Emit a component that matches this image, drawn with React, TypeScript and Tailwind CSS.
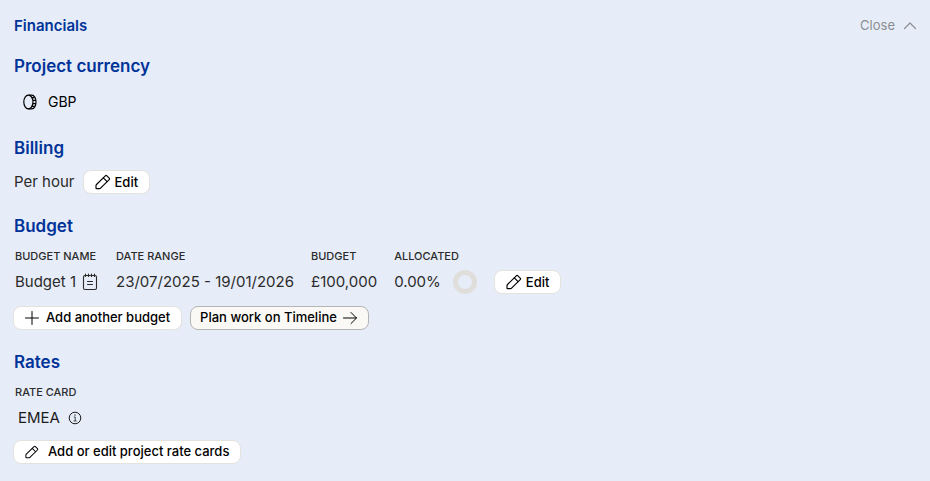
import React, { useState } from "react";

type IconProps = { className?: string };

function PencilIcon({ className }: IconProps) {
  return (
    <svg
      viewBox="0 0 16 16"
      fill="none"
      stroke="currentColor"
      strokeWidth="1.15"
      strokeLinecap="round"
      strokeLinejoin="round"
      className={className}
      aria-hidden="true"
    >
      <path d="M1.6 14.6Q1 14.6 1 14V11.6Q1 11 1.5 10.5L10.3 1.8Q11.1 1 11.9 1.8L14.2 4.1Q15 4.9 14.2 5.7L5.6 14.1Q5.1 14.6 4.4 14.6Z" />
      <path d="M8.3 3.9L12.1 7.7" />
    </svg>
  );
}

function CoinIcon({ className }: IconProps) {
  return (
    <svg
      viewBox="0 0 16 16"
      fill="none"
      stroke="currentColor"
      strokeWidth="1.2"
      className={className}
      aria-hidden="true"
    >
      <ellipse cx="6.4" cy="8" rx="4.6" ry="6.8" />
      <path d="M6.4 1.2H9.8C12.2 1.2 14 4.2 14 8S12.2 14.8 9.8 14.8H6.4" />
      <path d="M9.6 3.6H12.4M10.8 6.4H13.8M10.8 9.6H13.8M9.6 12.4H12.4" />
    </svg>
  );
}

function NotepadIcon({ className }: IconProps) {
  return (
    <svg
      viewBox="0 0 16 18"
      fill="none"
      stroke="currentColor"
      strokeWidth="1.1"
      strokeLinecap="round"
      className={className}
      aria-hidden="true"
    >
      <rect x="1.5" y="2.5" width="13" height="14" rx="1.5" />
      <path d="M3.5 1V3.5M6.5 1V3.5M9.5 1V3.5M12.5 1V3.5" />
      <path d="M5.5 8.5H10.5M5.5 11.5H10.5" />
    </svg>
  );
}

function PlusIcon({ className }: IconProps) {
  return (
    <svg viewBox="0 0 14 14" fill="none" stroke="currentColor" className={className} aria-hidden="true">
      <path d="M7 0.5V13.5M0.5 7H13.5" strokeLinecap="round" />
    </svg>
  );
}

function ArrowIcon({ className }: IconProps) {
  return (
    <svg
      viewBox="0 0 14 14"
      fill="none"
      stroke="currentColor"
      strokeLinecap="round"
      strokeLinejoin="round"
      className={className}
      aria-hidden="true"
    >
      <path d="M0.5 7H13.5M8 1.5L13.5 7L8 12.5" />
    </svg>
  );
}

function InfoIcon({ className }: IconProps) {
  return (
    <svg viewBox="0 0 14 14" fill="none" stroke="currentColor" className={className} aria-hidden="true">
      <circle cx="7" cy="7" r="5.8" />
      <path d="M5.8 6H7.2V10M5.6 10H8.6" strokeWidth="0.8" />
      <circle cx="7" cy="4" r="0.7" fill="currentColor" stroke="none" />
    </svg>
  );
}

function ChevronIcon({ className }: IconProps) {
  return (
    <svg
      viewBox="0 0 14 14"
      fill="none"
      stroke="currentColor"
      strokeWidth="1.2"
      strokeLinecap="round"
      strokeLinejoin="round"
      className={className}
      aria-hidden="true"
    >
      <path d="M1.5 9.5L7 4L12.5 9.5" />
    </svg>
  );
}

const buttonBase =
  "flex h-6 items-center rounded-lg border text-[13px] font-medium whitespace-nowrap text-black";
const buttonLight = `${buttonBase} border-[#e4e2dd] bg-white px-[11px]`;

function Section({ title, children }: { title: string; children: React.ReactNode }) {
  return (
    <section>
      <h2 className="mb-2.5 pl-px text-[17px] leading-6 font-semibold text-[#003399]">{title}</h2>
      {children}
    </section>
  );
}

const budgets = [
  { name: "Budget 1", range: "23/07/2025 - 19/01/2026", amount: "£100,000", allocated: "0.00%" },
];

export default function App() {
  const [open, setOpen] = useState(true);

  return (
    <main className="min-h-screen bg-[#e7edf8] px-[13px] py-4 font-['Inter',sans-serif] text-[#2b2b2b]">
      <header className="flex h-5 items-center justify-between pl-px">
        <h1 className="text-[15px] font-semibold text-[#003399]">Financials</h1>
        <button
          type="button"
          aria-expanded={open}
          onClick={() => setOpen(!open)}
          className="flex items-center gap-2 text-[13px] text-[#8b8d92]"
        >
          {open ? "Close" : "Open"}
          <ChevronIcon className={open ? "size-3.5" : "size-3.5 rotate-180"} />
        </button>
      </header>

      {open && (
        <div className="mt-[18px] flex flex-col gap-5">
          <Section title="Project currency">
            <div className="flex h-7 items-center gap-2.5 pl-[9px] text-sm text-black">
              <CoinIcon className="size-4" />
              GBP
            </div>
          </Section>

          <Section title="Billing">
            <div className="flex items-center gap-2 pl-px text-[15px] leading-6">
              Per hour
              <button type="button" className={`${buttonLight} gap-1`}>
                <PencilIcon className="size-4" />
                Edit
              </button>
            </div>
          </Section>

          <Section title="Budget">
            <table className="text-left">
              <thead>
                <tr className="text-[11px] leading-4 uppercase">
                  <th className="pr-[18px] pb-1.5 pl-0.5 font-medium">Budget name</th>
                  <th className="pr-[17px] pb-1.5 font-medium">Date range</th>
                  <th className="pr-[17px] pb-1.5 font-medium">Budget</th>
                  <th className="pr-[17px] pb-1.5 font-medium">Allocated</th>
                  <td />
                </tr>
              </thead>
              <tbody>
                {budgets.map((budget) => (
                  <tr key={budget.name} className="text-[15px] leading-6">
                    <td className="pr-[18px] pl-0.5">
                      <div className="flex items-center gap-1.5">
                        {budget.name}
                        <NotepadIcon className="h-[18px] w-4" />
                      </div>
                    </td>
                    <td className="pr-[17px]">{budget.range}</td>
                    <td className="pr-[17px]">{budget.amount}</td>
                    <td className="pr-[17px]">
                      <div className="flex items-center gap-3">
                        {budget.allocated}
                        <span className="size-6 rounded-full border-[5px] border-[#dfdedb]" />
                      </div>
                    </td>
                    <td>
                      <button type="button" className={`${buttonLight} gap-1`}>
                        <PencilIcon className="size-4" />
                        Edit
                      </button>
                    </td>
                  </tr>
                ))}
              </tbody>
            </table>

            <div className="mt-3 flex gap-2">
              <button type="button" className={`${buttonLight} gap-[7px]`}>
                <PlusIcon className="size-3.5" />
                Add another budget
              </button>
              <button type="button" className={`${buttonBase} gap-1.5 border-[#b5b5b5] bg-[#faf9f5] pr-[11px] pl-[9px]`}>
                Plan work on Timeline
                <ArrowIcon className="size-3.5" />
              </button>
            </div>
          </Section>

          <Section title="Rates">
            <h3 className="pl-0.5 text-[11px] leading-4 font-medium uppercase">Rate card</h3>
            <div className="mt-1.5 flex items-center gap-2 pl-[5px] text-[15px] leading-6 text-[#1c1c1c]">
              EMEA
              <InfoIcon className="size-3.5" />
            </div>
            <button type="button" className={`${buttonLight} mt-2.5 gap-[9px]`}>
              <PencilIcon className="size-3.5" />
              Add or edit project rate cards
            </button>
          </Section>
        </div>
      )}
    </main>
  );
}
